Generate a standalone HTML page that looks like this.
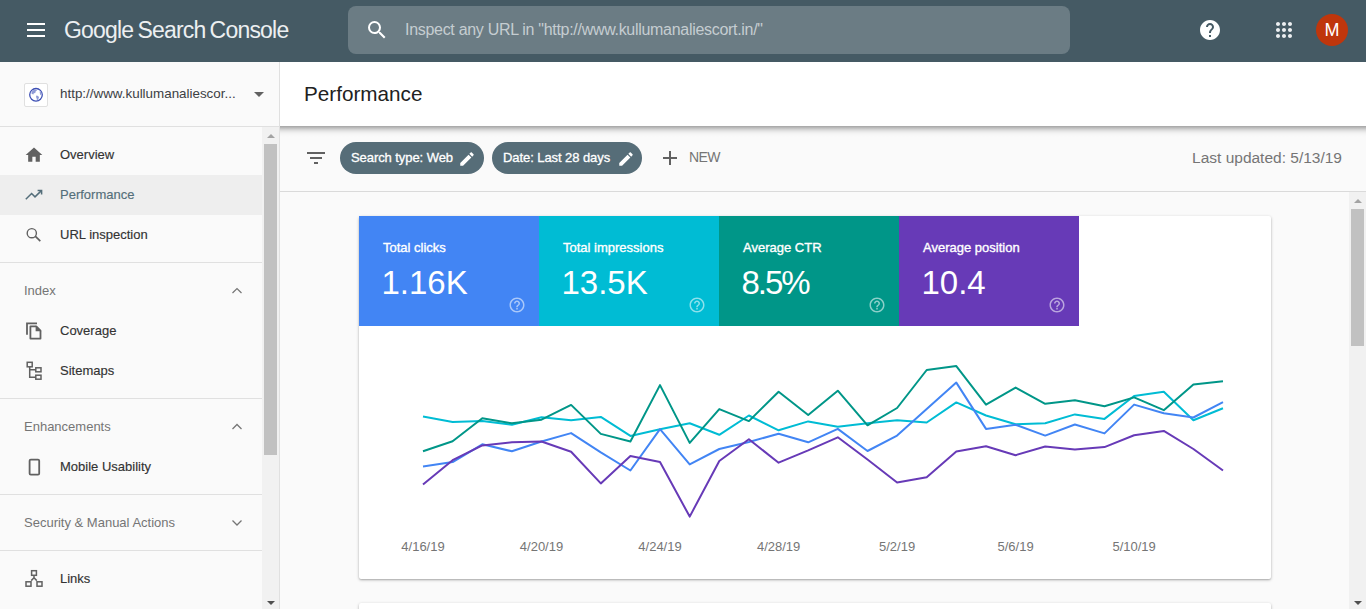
<!DOCTYPE html>
<html><head><meta charset="utf-8">
<style>
*{margin:0;padding:0;box-sizing:border-box}
html,body{width:1366px;height:609px;overflow:hidden;background:#fafafa;font-family:"Liberation Sans",sans-serif}
.abs{position:absolute}
#hdr{position:absolute;left:0;top:0;width:1366px;height:62px;background:#455a64}
#side{position:absolute;left:0;top:62px;width:280px;height:547px;background:#fafafa;border-right:1px solid #e0e0e0}
.nav{position:absolute;left:60px;font-size:13px;color:#333;white-space:nowrap;-webkit-text-stroke:0.15px currentColor}
.sec{position:absolute;left:24px;font-size:13px;color:#757575;white-space:nowrap}
.div{position:absolute;left:0;width:262px;height:1px;background:#e0e0e0}
.tile{position:absolute;top:0;width:180px;height:110px;color:#fff}
.tile .t{position:absolute;left:24px;top:24px;font-size:13px;white-space:nowrap;-webkit-text-stroke:0.35px #fff}
.tile .v{position:absolute;left:22.5px;top:47.5px;font-size:33px;white-space:nowrap}
.tile svg{position:absolute;left:149px;top:80.2px}
.chip{font-size:13px;color:#fff;white-space:nowrap;letter-spacing:-0.07px;-webkit-text-stroke:0.3px #fff}
.xl{position:absolute;top:323px;width:100px;margin-left:-50px;text-align:center;font-size:13px;color:#757575;white-space:nowrap}
</style></head><body>
<div id="hdr">
  <!-- hamburger -->
  <div class="abs" style="left:27px;top:23px;width:18px;height:2px;background:#fff"></div>
  <div class="abs" style="left:27px;top:29px;width:18px;height:2px;background:#fff"></div>
  <div class="abs" style="left:27px;top:35px;width:18px;height:2px;background:#fff"></div>
  <div class="abs" style="left:64px;top:17px;font-size:23px;color:#eceff1;white-space:nowrap;letter-spacing:-0.8px;word-spacing:-1.5px">Google Search Console</div>
  <div class="abs" style="left:348px;top:6px;width:722px;height:48px;border-radius:8px;background:#6b7c84"></div>
  <svg class="abs" style="left:365px;top:18px" width="24" height="24" viewBox="0 0 24 24"><path fill="#fff" d="M15.5 14h-.79l-.28-.27A6.47 6.47 0 0 0 16 9.5 6.5 6.5 0 1 0 9.5 16c1.61 0 3.09-.59 4.23-1.57l.27.28v.79l5 4.99L20.49 19l-4.99-5zm-6 0C7.01 14 5 11.99 5 9.5S7.01 5 9.5 5 14 7.01 14 9.5 11.99 14 9.5 14z"/></svg>
  <div class="abs" style="left:405px;top:21px;font-size:16px;letter-spacing:-0.3px;color:#c5cdd1;white-space:nowrap">Inspect any URL in "http://www.kullumanaliescort.in/"</div>
  <svg class="abs" style="left:1198px;top:18px" width="24" height="24" viewBox="0 0 24 24"><path fill="#fff" d="M12 2C6.48 2 2 6.48 2 12s4.48 10 10 10 10-4.48 10-10S17.52 2 12 2zm1 17h-2v-2h2v2zm2.07-7.75l-.9.92C13.45 12.9 13 13.5 13 15h-2v-.5c0-1.1.45-2.1 1.17-2.83l1.24-1.26c.37-.36.59-.86.59-1.41 0-1.1-.9-2-2-2s-2 .9-2 2H8c0-2.21 1.79-4 4-4s4 1.79 4 4c0 .88-.36 1.68-.93 2.25z"/></svg>
  <svg class="abs" style="left:1272px;top:18px" width="24" height="24" viewBox="0 0 24 24"><path fill="#eceff1" d="M6 8c1.1 0 2-.9 2-2s-.9-2-2-2-2 .9-2 2 .9 2 2 2zm6 0c1.1 0 2-.9 2-2s-.9-2-2-2-2 .9-2 2 .9 2 2 2zm6 0c1.1 0 2-.9 2-2s-.9-2-2-2-2 .9-2 2 .9 2 2 2zM6 14c1.1 0 2-.9 2-2s-.9-2-2-2-2 .9-2 2 .9 2 2 2zm6 0c1.1 0 2-.9 2-2s-.9-2-2-2-2 .9-2 2 .9 2 2 2zm6 0c1.1 0 2-.9 2-2s-.9-2-2-2-2 .9-2 2 .9 2 2 2zM6 20c1.1 0 2-.9 2-2s-.9-2-2-2-2 .9-2 2 .9 2 2 2zm6 0c1.1 0 2-.9 2-2s-.9-2-2-2-2 .9-2 2 .9 2 2 2zm6 0c1.1 0 2-.9 2-2s-.9-2-2-2-2 .9-2 2 .9 2 2 2z"/></svg>
  <div class="abs" style="left:1316px;top:14px;width:32px;height:32px;border-radius:50%;background:#bf360c;color:#fff;font-size:18px;text-align:center;line-height:32px">M</div>
</div>

<div id="side">
  <div class="abs" style="left:24px;top:21px;width:24px;height:24px;background:#fff;border:1px solid #e0e0e0;border-radius:2px"></div>
  <svg class="abs" style="left:28px;top:25px" width="16" height="16" viewBox="0 0 16 16">
    <circle cx="8" cy="7.8" r="6.3" fill="#fff" stroke="#3f51b5" stroke-width="1.3"/>
    <path fill="#8f9bd6" d="M4.2 4.2 C5 3 6.5 2.3 8 2.4 L9 3.6 7.6 4.6 7.3 6 5.8 6.3 5.4 7.6 4 7 3.3 6 z M8.4 8.6 L10.2 8.9 11 10.4 10.1 12.6 8.9 13.2 8.6 11.2 8 10 z M11.6 4.2 L13.2 5.5 13.3 8.2 12.2 7.8 11.8 6 z"/>
  </svg>
  <div class="abs" style="left:60px;top:24px;font-size:13.4px;color:#3c4043;white-space:nowrap">http://www.kullumanaliescor...</div>
  <div class="abs" style="left:254px;top:30px;width:0;height:0;border-left:5px solid transparent;border-right:5px solid transparent;border-top:5px solid #616161"></div>
  <div class="div" style="top:64px;width:279px"></div>
  <!-- scrollbar -->
  <div class="abs" style="left:262px;top:65px;width:17px;height:482px;background:#f1f1f1"></div>
  <div class="abs" style="left:264px;top:82px;width:13px;height:311px;background:#c1c1c1"></div>
  <div class="abs" style="left:266.5px;top:72px;width:0;height:0;border-left:4px solid transparent;border-right:4px solid transparent;border-bottom:4px solid #a3a3a3"></div>
  <div class="abs" style="left:266.5px;top:539px;width:0;height:0;border-left:4px solid transparent;border-right:4px solid transparent;border-top:4px solid #505050"></div>

  <!-- nav -->
  <div class="abs" style="left:0;top:113px;width:262px;height:40px;background:#eeeeee"></div>
  <div class="nav" style="top:85px">Overview</div>
  <div class="nav" style="top:125px;color:#546e7a">Performance</div>
  <div class="nav" style="top:165px">URL inspection</div>
  <div class="div" style="top:200px"></div>
  <div class="sec" style="top:221px">Index</div>
  <div class="nav" style="top:261px">Coverage</div>
  <div class="nav" style="top:301px">Sitemaps</div>
  <div class="div" style="top:336px"></div>
  <div class="sec" style="top:357px">Enhancements</div>
  <div class="nav" style="top:397px">Mobile Usability</div>
  <div class="div" style="top:432px"></div>
  <div class="sec" style="top:453px">Security &amp; Manual Actions</div>
  <div class="div" style="top:488px"></div>
  <div class="nav" style="top:509px">Links</div>
</div>
<svg class="abs" style="left:0;top:0" width="279" height="609">
  <path fill="#616161" transform="translate(24,145) scale(.8333)" d="M10 20v-6h4v6h5v-8h3L12 3 2 12h3v8z"/>
  <g fill="none" stroke="#546e7a" stroke-width="1.5"><path d="M25.8 199.3 L31.6 193.5 L35 196.9 L41.4 190.6"/><path d="M37.6 190.5 H41.6 V194.5"/></g>
  <g fill="none" stroke="#616161"><circle cx="31.8" cy="233.2" r="4.6" stroke-width="1.4"/><path d="M35.2 236.1 L40.3 241.2" stroke-width="1.7"/></g>
  <g fill="none" stroke="#757575" stroke-width="1.25">
    <path d="M232.5 293 L237 288.6 L241.5 293"/>
    <path d="M232.5 429 L237 424.5 L241.5 429"/>
    <path d="M232.5 520.5 L237 525 L241.5 520.5"/>
  </g>
  <g fill="none" stroke="#616161" stroke-width="1.8">
    <path d="M27 334.7 V323.3 H37"/>
    <path d="M30.4 326.4 H36.3 L40.5 330.6 V338.6 H30.4 Z" stroke-linejoin="round"/>
  </g>
  <path fill="#616161" d="M35.6 325.5 L41.4 331.3 H35.6 Z"/>
  <g fill="none" stroke="#616161" stroke-width="1.5">
    <rect x="27.2" y="362.3" width="5" height="4.5"/>
    <rect x="35.8" y="367.8" width="5.2" height="4"/>
    <rect x="35.8" y="375.2" width="5.2" height="4"/>
    <path d="M29.7 366.8 V377.2 H35.8 M29.7 369.8 H35.8"/>
  </g>
  <rect x="29.6" y="459.6" width="9.6" height="15" rx="1.2" fill="none" stroke="#616161" stroke-width="1.8"/>
  <g fill="none" stroke="#616161" stroke-width="1.5">
    <rect x="31.6" y="570.7" width="4.8" height="4.6"/>
    <rect x="26" y="581.8" width="5" height="4.4"/>
    <rect x="37" y="581.8" width="5" height="4.4"/>
    <path d="M34 575.3 V577.8 L31.2 580.6 M34 577.8 L36.8 580.6"/>
  </g>
</svg>
<!-- title bar -->
<div class="abs" style="left:280px;top:62px;width:1086px;height:64px;background:#fff;z-index:2">
  <div class="abs" style="left:24px;top:20px;font-size:20.7px;color:#212121">Performance</div>
</div>
<!-- filter bar -->
<div class="abs" style="left:280px;top:126px;width:1086px;height:66px;background:#fafafa;border-bottom:1px solid #dadada">
  <div class="abs" style="left:27px;top:26px;width:18px;height:1.8px;background:#616161"></div>
  <div class="abs" style="left:30px;top:31.2px;width:12px;height:1.8px;background:#616161"></div>
  <div class="abs" style="left:34px;top:36.4px;width:4px;height:1.8px;background:#616161"></div>
  <div class="abs" style="left:60px;top:16px;width:144px;height:32px;border-radius:16px;background:#566d78"></div>
  <div class="abs chip" style="left:71px;top:24px">Search type: Web</div>
  <svg class="abs" style="left:178.4px;top:23.7px" width="18" height="18" viewBox="0 0 24 24"><path fill="#fff" d="M3 17.25V21h3.75L17.81 9.94l-3.75-3.75L3 17.25zM20.71 7.04c.39-.39.39-1.02 0-1.41l-2.34-2.34c-.39-.39-1.02-.39-1.41 0l-1.83 1.83 3.75 3.75 1.83-1.83z"/></svg>
  <div class="abs" style="left:212px;top:16px;width:150px;height:32px;border-radius:16px;background:#566d78"></div>
  <div class="abs chip" style="left:223px;top:24px">Date: Last 28 days</div>
  <svg class="abs" style="left:337px;top:23.7px" width="18" height="18" viewBox="0 0 24 24"><path fill="#fff" d="M3 17.25V21h3.75L17.81 9.94l-3.75-3.75L3 17.25zM20.71 7.04c.39-.39.39-1.02 0-1.41l-2.34-2.34c-.39-.39-1.02-.39-1.41 0l-1.83 1.83 3.75 3.75 1.83-1.83z"/></svg>
  <div class="abs" style="left:383px;top:30.9px;width:14px;height:2px;background:#616161"></div>
  <div class="abs" style="left:389px;top:25px;width:2px;height:14px;background:#616161"></div>
  <div class="abs" style="left:409px;top:23px;font-size:14px;letter-spacing:-0.6px;color:#757575;white-space:nowrap">NEW</div>
  <div class="abs" style="right:24px;top:23px;font-size:15.5px;color:#757575;white-space:nowrap">Last updated: 5/13/19</div>
</div>
<div class="abs" style="left:280px;top:126px;width:1086px;height:11px;z-index:2;background:linear-gradient(rgba(0,0,0,.34) 0px,rgba(0,0,0,.24) 2px,rgba(0,0,0,.13) 4px,rgba(0,0,0,.06) 6px,rgba(0,0,0,.02) 8px,rgba(0,0,0,0) 11px)"></div>
<!-- main scrollbar -->
<div class="abs" style="left:1349px;top:192px;width:17px;height:417px;background:#f1f1f1"></div>
<div class="abs" style="left:1351px;top:209px;width:13px;height:137px;background:#c1c1c1"></div>
<div class="abs" style="left:1353.5px;top:199px;width:0;height:0;border-left:4px solid transparent;border-right:4px solid transparent;border-bottom:4px solid #a3a3a3"></div>
<div class="abs" style="left:1353.5px;top:601px;width:0;height:0;border-left:4px solid transparent;border-right:4px solid transparent;border-top:4px solid #505050"></div>

<!-- card -->
<div class="abs" style="left:359px;top:216px;width:912px;height:363px;background:#fff;border-radius:2px;box-shadow:0 1px 3px rgba(0,0,0,.3),0 1px 1px rgba(0,0,0,.08)">
  <div class="tile" style="left:0;background:#4285f4"><div class="t">Total clicks</div><div class="v">1.16K</div><svg width="18" height="18" viewBox="0 0 24 24"><path fill="rgba(255,255,255,.55)" d="M11 18h2v-2h-2v2zm1-16C6.48 2 2 6.48 2 12s4.48 10 10 10 10-4.48 10-10S17.52 2 12 2zm0 18c-4.41 0-8-3.59-8-8s3.59-8 8-8 8 3.59 8 8-3.59 8-8 8zm0-14c-2.21 0-4 1.79-4 4h2c0-1.1.9-2 2-2s2 .9 2 2c0 2-3 1.75-3 5h2c0-2.25 3-2.5 3-5 0-2.21-1.79-4-4-4z"/></svg></div>
  <div class="tile" style="left:180px;background:#00bcd4"><div class="t">Total impressions</div><div class="v">13.5K</div><svg width="18" height="18" viewBox="0 0 24 24"><path fill="rgba(255,255,255,.55)" d="M11 18h2v-2h-2v2zm1-16C6.48 2 2 6.48 2 12s4.48 10 10 10 10-4.48 10-10S17.52 2 12 2zm0 18c-4.41 0-8-3.59-8-8s3.59-8 8-8 8 3.59 8 8-3.59 8-8 8zm0-14c-2.21 0-4 1.79-4 4h2c0-1.1.9-2 2-2s2 .9 2 2c0 2-3 1.75-3 5h2c0-2.25 3-2.5 3-5 0-2.21-1.79-4-4-4z"/></svg></div>
  <div class="tile" style="left:360px;background:#009688"><div class="t">Average CTR</div><div class="v" style="letter-spacing:-2px">8.5%</div><svg width="18" height="18" viewBox="0 0 24 24"><path fill="rgba(255,255,255,.55)" d="M11 18h2v-2h-2v2zm1-16C6.48 2 2 6.48 2 12s4.48 10 10 10 10-4.48 10-10S17.52 2 12 2zm0 18c-4.41 0-8-3.59-8-8s3.59-8 8-8 8 3.59 8 8-3.59 8-8 8zm0-14c-2.21 0-4 1.79-4 4h2c0-1.1.9-2 2-2s2 .9 2 2c0 2-3 1.75-3 5h2c0-2.25 3-2.5 3-5 0-2.21-1.79-4-4-4z"/></svg></div>
  <div class="tile" style="left:540px;background:#673ab7"><div class="t">Average position</div><div class="v">10.4</div><svg width="18" height="18" viewBox="0 0 24 24"><path fill="rgba(255,255,255,.55)" d="M11 18h2v-2h-2v2zm1-16C6.48 2 2 6.48 2 12s4.48 10 10 10 10-4.48 10-10S17.52 2 12 2zm0 18c-4.41 0-8-3.59-8-8s3.59-8 8-8 8 3.59 8 8-3.59 8-8 8zm0-14c-2.21 0-4 1.79-4 4h2c0-1.1.9-2 2-2s2 .9 2 2c0 2-3 1.75-3 5h2c0-2.25 3-2.5 3-5 0-2.21-1.79-4-4-4z"/></svg></div>
  <svg class="abs" style="left:0;top:0" width="912" height="363">
    <g fill="none" stroke-width="2" stroke-linejoin="round" transform="translate(0,0.5)">
    <polyline stroke="#00bcd4" points="64.0,199.9 93.6,205.4 123.3,204.6 152.9,208.2 182.5,200.7 212.1,203.8 241.8,200.4 271.4,219.4 301.0,212.7 330.7,206.8 360.3,218.3 389.9,199.0 419.6,213.8 449.2,204.9 478.8,210.2 508.5,206.8 538.1,203.8 567.7,206.0 597.3,185.9 627.0,199.0 656.6,207.7 686.2,206.8 715.9,197.9 745.5,202.4 775.1,179.5 804.8,175.3 834.4,203.8 864.0,191.8"/>
    <polyline stroke="#009688" points="64.0,234.8 93.6,224.7 123.3,201.8 152.9,206.8 182.5,203.2 212.1,188.4 241.8,217.4 271.4,225.0 301.0,168.6 330.7,226.4 360.3,192.6 389.9,204.6 419.6,175.3 449.2,198.5 478.8,174.2 508.5,208.8 538.1,191.5 567.7,153.5 597.3,149.6 627.0,188.1 656.6,171.1 686.2,187.3 715.9,183.7 745.5,189.8 775.1,180.9 804.8,193.7 834.4,168.0 864.0,164.7"/>
    <polyline stroke="#4285f4" points="64.0,250.1 93.6,245.6 123.3,227.8 152.9,234.8 182.5,225.0 212.1,216.6 241.8,235.9 271.4,254.0 301.0,212.7 330.7,247.9 360.3,232.5 389.9,225.5 419.6,217.2 449.2,225.8 478.8,212.4 508.5,234.5 538.1,219.1 567.7,192.6 597.3,166.1 627.0,212.4 656.6,208.2 686.2,219.1 715.9,208.0 745.5,216.9 775.1,188.1 804.8,196.8 834.4,201.0 864.0,185.6"/>
    <polyline stroke="#673ab7" points="64.0,268.0 93.6,243.7 123.3,228.9 152.9,225.8 182.5,225.0 212.1,235.3 241.8,266.9 271.4,239.5 301.0,245.4 330.7,300.1 360.3,244.5 389.9,222.8 419.6,246.2 449.2,233.9 478.8,220.8 508.5,243.0 538.1,266.0 567.7,260.7 597.3,235.0 627.0,229.7 656.6,238.7 686.2,230.0 715.9,233.1 745.5,230.6 775.1,218.8 804.8,214.4 834.4,232.5 864.0,254.0"/>
    </g>
  </svg>
  <div class="xl" style="left:64px">4/16/19</div>
  <div class="xl" style="left:182.5px">4/20/19</div>
  <div class="xl" style="left:301px">4/24/19</div>
  <div class="xl" style="left:419.6px">4/28/19</div>
  <div class="xl" style="left:538.1px">5/2/19</div>
  <div class="xl" style="left:656.6px">5/6/19</div>
  <div class="xl" style="left:775.1px">5/10/19</div>
</div>
<!-- card 2 top -->
<div class="abs" style="left:359px;top:603px;width:912px;height:20px;background:#fff;border-radius:2px;box-shadow:0 1px 3px rgba(0,0,0,.3),0 1px 1px rgba(0,0,0,.08)"></div>
</body></html>
